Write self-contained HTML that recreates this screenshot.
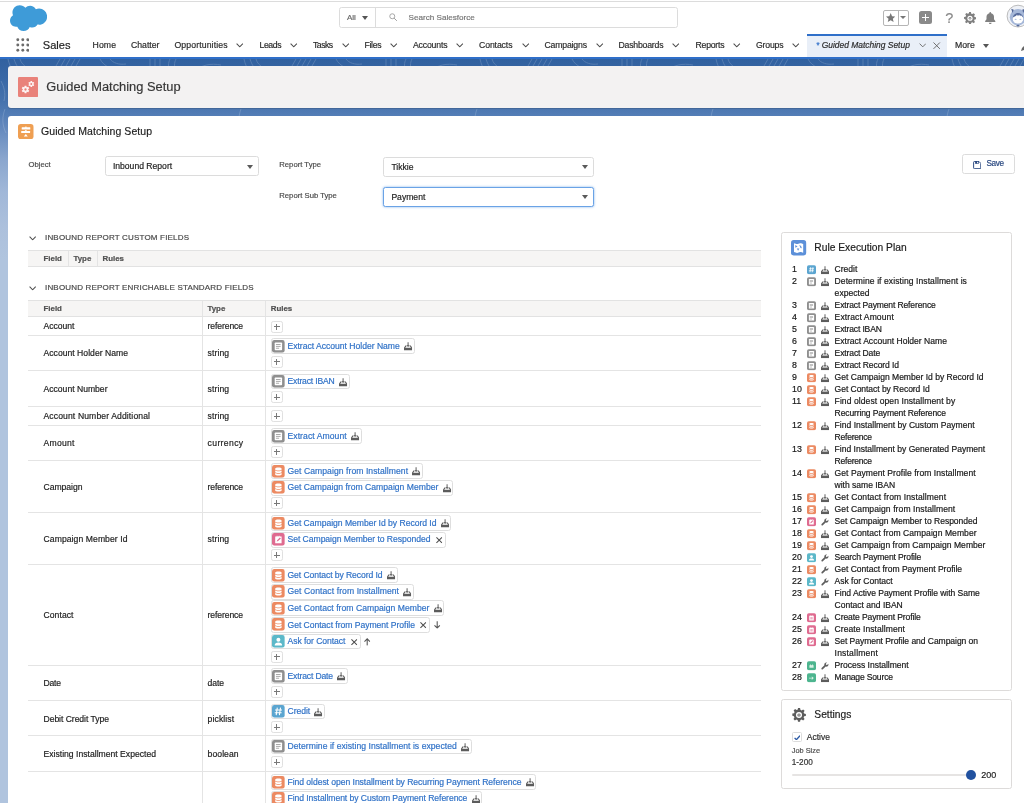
<!DOCTYPE html>
<html><head><meta charset="utf-8"><title>Guided Matching Setup | Salesforce</title>
<style>
*{box-sizing:border-box;margin:0;padding:0}
html,body{width:1024px;height:803px;overflow:hidden;background:#fff}
body{font-family:"Liberation Sans",sans-serif;font-size:8.600px;color:#1c1c1c;position:relative}
#root{position:absolute;left:0;top:0;width:1024px;height:803px;overflow:hidden;will-change:transform;-webkit-text-stroke:.18px}
.abs{position:absolute}
svg.ic{display:block;flex:none;overflow:visible}
#bg{position:absolute;left:0;top:59px;width:1024px;height:744px;background:linear-gradient(to bottom,#31619f 0px,#3867a5 18px,#4572ad 42px,#527cb5 55px,#6c8fc1 75px,#8aa6ce 100px,#a0b7d8 132px,#acc0dc 168px,#b0c4de 200px)}
#bline{position:absolute;left:0;top:56.500px;width:1024px;height:2.500px;background:#2f6fc9}
.nv{position:absolute;top:39.500px;font-size:8.700px;color:#2a2a2a;white-space:nowrap;line-height:11px}
#ph{position:absolute;left:8px;top:66px;width:1030px;height:42px;background:#f3f2f2;border-radius:3px;box-shadow:0 1px 1px rgba(0,0,0,.15)}
#card{position:absolute;left:8px;top:115.500px;width:1030px;height:700px;background:#fff;border-radius:3px}
.lbl{position:absolute;font-size:7.700px;color:#4a4a4a;white-space:nowrap;line-height:10px}
.sel{position:absolute;height:20px;border:1px solid #dcdcdc;border-radius:2.500px;background:#fff;font-size:8.600px;line-height:18px;padding-left:7.400px;color:#222}
.sel:after{content:"";position:absolute;right:5.200px;top:7.600px;border-left:3.600px solid transparent;border-right:3.600px solid transparent;border-top:4.200px solid #5a5a5a}
.sec{position:absolute;left:45px;font-size:8px;letter-spacing:.18px;color:#484848;white-space:nowrap;line-height:10px}
.th{position:absolute;left:28px;width:733px;height:17px;background:#f6f5f4;border-top:1px solid #e2e2e2;border-bottom:1px solid #e2e2e2}
.th span{position:absolute;top:3px;font-weight:bold;font-size:7.900px;color:#505050;line-height:10px}
#tb{position:absolute;left:28px;top:300.500px;width:733px;height:520px}
.tr{position:absolute;left:0;width:733px;border-bottom:1px solid #e4e4e4}
.tr>div{position:absolute;top:0;bottom:0}
.c1{left:0;width:174px;padding-left:15.500px;padding-top:1px;display:flex;align-items:center;white-space:nowrap}
.c2{left:174px;width:63px;padding-left:4.600px;padding-top:1px;display:flex;align-items:center;border-left:1px solid #e4e4e4}
.c3{left:237px;width:496px;padding-left:4.500px;padding-top:2.900px;border-left:1px solid #e4e4e4}
.pl{display:flex;align-items:flex-start;height:16.550px;}
.pill{display:inline-flex;align-items:center;height:15.600px;border:1px solid #dedede;border-radius:2.600px;padding-left:.3px;background:#fff}
.pt{color:#2f71c7;margin-left:2.900px;white-space:nowrap;line-height:13px;padding-top:.5px}
.plus{position:relative;width:12.300px;height:12px;border:1px solid #e0e0e0;border-radius:2.300px;margin-top:.7px}
.plus i{position:absolute;left:2.200px;top:4.500px;width:5.900px;height:1px;background:#787878}
.plus b{position:absolute;left:4.650px;top:2.050px;width:1px;height:5.900px;background:#787878}
.panel{position:absolute;left:781px;width:231px;border:1px solid #dddbda;border-radius:2.500px;background:#fff}
.ptitle{position:absolute;left:32.300px;font-size:10.250px;color:#1c1c1c;white-space:nowrap;line-height:13px}
.pr{position:absolute;left:10px;width:215px;line-height:12px;font-size:8.550px;color:#161616}
.pn{position:absolute;left:0;top:0;font-size:8.800px}
.ptx{position:absolute;left:42.600px;top:0;white-space:nowrap}
</style></head><body><div id="root">

<svg width="0" height="0" style="position:absolute">
<defs>
<symbol id="i-db" viewBox="0 0 26 26"><rect width="26" height="26" rx="5" fill="#ec8a62"/>
 <path d="M6.500 7.200c0-1.300 2.900-2.200 6.500-2.200s6.500.9 6.500 2.200v1.700c0 1.300-2.900 2.200-6.500 2.200s-6.500-.9-6.500-2.200z" fill="#fff"/>
 <path d="M6.500 11.300c1.400 1.100 3.800 1.500 6.500 1.500s5.100-.4 6.500-1.500v2.700c0 1.300-2.900 2.200-6.500 2.200s-6.500-.9-6.500-2.200z" fill="#fff"/>
 <path d="M6.500 16.400c1.400 1.100 3.800 1.500 6.500 1.500s5.100-.4 6.500-1.500v2.700c0 1.300-2.900 2.200-6.500 2.200s-6.500-.9-6.500-2.200z" fill="#fff"/>
</symbol>
<symbol id="i-doc" viewBox="0 0 26 26"><rect width="26" height="26" rx="5" fill="#8f8f8f"/>
 <rect x="5.500" y="5" width="15" height="16" rx="1.500" fill="#fff"/>
 <rect x="8" y="8.200" width="9.500" height="1.700" fill="#999"/><rect x="8" y="12" width="9.500" height="1.700" fill="#999"/><rect x="8" y="15.800" width="6.500" height="1.700" fill="#999"/>
</symbol>
<symbol id="i-upd" viewBox="0 0 26 26"><rect width="26" height="26" rx="5" fill="#df6b90"/>
 <path d="M6.500 7h3v-1.500h7v1.500h3v14h-13z" fill="#fff"/>
 <rect x="10.500" y="4.500" width="5" height="2.200" fill="#df6b90"/>
 <path d="M9.500 17.500l1-3 5.500-5.500 2 2-5.500 5.500z" fill="#df6b90"/>
</symbol>
<symbol id="i-crt" viewBox="0 0 26 26"><rect width="26" height="26" rx="5" fill="#df6b90"/>
 <path d="M6.500 7h3v-1.500h7v1.500h3v14h-13z" fill="#fff"/>
 <rect x="10.500" y="4.500" width="5" height="2.200" fill="#df6b90"/>
 <rect x="9.500" y="11" width="7" height="7" fill="#eeb0c4"/>
</symbol>
<symbol id="i-usr" viewBox="0 0 26 26"><rect width="26" height="26" rx="5" fill="#5cb8c9"/>
 <circle cx="13" cy="9.700" r="4" fill="#fff"/>
 <path d="M5.500 20.500c0-3.500 3-5.300 7.500-5.300s7.500 1.800 7.500 5.300v.8h-15z" fill="#fff"/>
</symbol>
<symbol id="i-hash" viewBox="0 0 26 26"><rect width="26" height="26" rx="5" fill="#5ba5d0"/>
 <path d="M10.800 5.500l-2.300 15M17.300 5.500l-2.300 15M6.300 10.200h14M5.500 15.800h14" stroke="#fff" stroke-width="2.200" fill="none"/>
</symbol>
<symbol id="i-grn1" viewBox="0 0 26 26"><rect width="26" height="26" rx="5" fill="#4db58f"/>
 <path d="M7 19v-7l3.500-3 2.500 3 2.500-3 3.500 3v7z" fill="#d9f0e3"/>
</symbol>
<symbol id="i-grn2" viewBox="0 0 26 26"><rect width="26" height="26" rx="5" fill="#4db58f"/>
 <path d="M6 13h9l-2.500-3h3l4 4-4 4h-3l2.500-3h-9z" fill="#d9f0e3"/>
</symbol>
<symbol id="i-dl" viewBox="0 0 16 16">
 <path d="M2.200 12l2.600-4.600h6.400l2.600 4.600z" fill="#dadada"/>
 <path d="M6.900 .2h2.200v5.400h2.200l-3.300 3.900-3.300-3.900h2.200z" fill="#6e6e6e"/>
 <path d="M0 16v-5.200l2.700-4.300h2.300l-2.500 4.700h11l-2.500-4.700h2.300l2.700 4.300v5.200z" fill="#5c5c5c"/>
</symbol>
<symbol id="i-x" viewBox="0 0 12 12"><path d="M.8 .8l10.400 10.400M11.200 .8l-10.400 10.400" stroke="#4d4d4d" stroke-width="1.900" fill="none"/></symbol>
<symbol id="i-dn" viewBox="0 0 12 14"><path d="M6 0.300v12.500M.9 7.700l5.100 5.100 5.100-5.100" stroke="#555" stroke-width="2" fill="none"/></symbol>
<symbol id="i-up" viewBox="0 0 12 14"><path d="M6 13.700v-12.500M.9 6.300l5.100-5.100 5.100 5.100" stroke="#555" stroke-width="2" fill="none"/></symbol>
<symbol id="i-wr" viewBox="0 0 16 16"><path d="M14.600 3.300l-2.500 2.500-2-.500-.5-2 2.500-2.500c-1.700-.600-3.600-.100-4.700 1.300-.9 1.200-1.100 2.700-.6 4l-5.600 5.700c-.7.700-.7 1.800 0 2.500s1.800.7 2.500 0l5.700-5.600c1.300.5 2.800.3 4-.6 1.400-1.100 1.900-3.100 1.200-4.800z" fill="#5f5f5f"/></symbol>
<symbol id="i-chev" viewBox="0 0 16 10"><path d="M1.300 1.300l6.700 6.900 6.700-6.900" stroke="#4f4f4f" stroke-width="2.300" fill="none"/></symbol>
</defs></svg>


<div class="abs" style="left:0;top:1px;width:1024px;height:1px;background:#dcdcdc"></div>
<!-- cloud logo -->
<svg class="abs" style="left:9.500px;top:4.500px" width="37" height="26" viewBox="0 0 74 52"><path fill="#3e9bd8" d="M30.800 5.700C33.200 3.200 36.500 1.600 40.200 1.600c4.900 0 9.200 2.700 11.500 6.800 2-.9 4.200-1.400 6.500-1.400 8.900 0 16 7.200 16 16.200s-7.200 16.200-16 16.200c-1.100 0-2.100-.1-3.200-.3-2 3.600-5.900 6-10.300 6-1.900 0-3.600-.4-5.200-1.200-2 4.800-6.800 8.100-12.300 8.100-5.800 0-10.700-3.600-12.600-8.700-.8.200-1.700.3-2.600.3C5.200 43.600 0 38 0 31.200c0-4.600 2.500-8.600 6.100-10.700-.8-1.700-1.200-3.600-1.200-5.700C4.900 6.800 11.400.4 19.400.4c4.700 0 8.800 2.100 11.400 5.300z"/></svg>
<!-- search -->
<div class="abs" style="left:339px;top:7px;width:338.500px;height:20.500px;border:1px solid #dcdcdc;border-radius:2.500px;background:#fff"></div>
<div class="abs" style="left:375px;top:8px;width:1px;height:19px;background:#dcdcdc"></div>
<div class="abs" style="left:347px;top:12px;font-size:8px;color:#666;line-height:11px">All</div>
<div class="abs" style="left:362.300px;top:15.800px;border-left:3.600px solid transparent;border-right:3.600px solid transparent;border-top:4.100px solid #555"></div>
<svg class="abs" style="left:388.800px;top:13.300px" width="8.500" height="8.500" viewBox="0 0 17 17"><circle cx="6.500" cy="6.500" r="5" stroke="#999" stroke-width="1.700" fill="none"/><path d="M10.200 10.200l5.500 5.500" stroke="#999" stroke-width="1.900"/></svg>
<div class="abs" style="left:408.600px;top:12px;font-size:8.100px;color:#757575;line-height:11px;white-space:nowrap">Search Salesforce</div>
<!-- right icons -->
<div class="abs" style="left:883px;top:10px;width:26px;height:15.500px;border:1px solid #b5b5b5;border-radius:2px;background:#fff"></div>
<div class="abs" style="left:897.500px;top:10px;width:1px;height:15.500px;background:#b5b5b5"></div>
<svg class="abs" style="left:886px;top:12.800px" width="9.400" height="9" viewBox="0 0 20 19"><path fill="#777" d="M10 0l2.900 6.600 7.100.7-5.400 4.700 1.600 7-6.200-3.700-6.200 3.700 1.600-7L0 7.300l7.100-.7z"/></svg>
<div class="abs" style="left:900.200px;top:16px;border-left:3.300px solid transparent;border-right:3.300px solid transparent;border-top:3.800px solid #777"></div>
<div class="abs" style="left:919px;top:11px;width:13.300px;height:13.300px;border-radius:2.500px;background:#8a8a8a"></div>
<div class="abs" style="left:922px;top:16.900px;width:7.300px;height:1.500px;background:#fff"></div>
<div class="abs" style="left:924.900px;top:14px;width:1.500px;height:7.300px;background:#fff"></div>
<div class="abs" style="left:945.200px;top:9px;font-size:14.500px;color:#8a8a8a;line-height:18px">?</div>
<svg class="abs" style="left:963.500px;top:11.500px" width="12" height="12.500" viewBox="0 0 24 25"><path fill="#808080" d="M10 0h4l.7 3.400 2.300 1 3-1.900 2.800 2.800-1.900 3 1 2.300 3.400.7v4l-3.400.7-1 2.300 1.900 3-2.800 2.800-3-1.900-2.300 1-.7 3.400h-4l-.7-3.400-2.300-1-3 1.900-2.800-2.800 1.900-3-1-2.300L-1 14.600v-4l3.400-.7 1-2.300-1.900-3 2.800-2.800 3 1.900 2.300-1z" transform="translate(1 .2) scale(.92)"/><circle cx="12" cy="12.500" r="5.200" fill="#fff"/><circle cx="12" cy="12.500" r="2.600" fill="#808080"/><circle cx="12" cy="12.500" r="1.100" fill="#fff"/></svg>
<svg class="abs" style="left:984px;top:11.500px" width="12.500" height="12.500" viewBox="0 0 25 25"><path fill="#808080" d="M12.500 0c1 0 1.800.8 1.800 1.800v.6c3.300.8 5.700 3.700 5.700 7.200v5l2.600 3.600c.5.800 0 1.800-1 1.800h-18.200c-1 0-1.500-1-1-1.800l2.600-3.600v-5c0-3.500 2.400-6.400 5.700-7.200v-.6c0-1 .8-1.800 1.800-1.800zM9.700 21.500h5.600c0 1.600-1.300 2.800-2.800 2.800s-2.800-1.200-2.800-2.800z"/></svg>
<!-- avatar -->
<svg class="abs" style="left:1006.200px;top:4.400px" width="24" height="24" viewBox="0 0 24 24">
 <circle cx="12" cy="12.100" r="10.900" fill="#eef1f7" stroke="#b4b4b4" stroke-width=".9"/>
 <circle cx="12" cy="13.300" r="8.200" fill="#a5b7d8"/>
 <path d="M5.200 4.800l2.600 1 -1.200 3.200zM18.800 4.800l-2.600 1 1.200 3.200z" fill="#4f6496"/>
 <ellipse cx="12" cy="15" rx="5.300" ry="4.500" fill="#fff"/>
 <path d="M6.800 13.500c.6-3 2.800-4.500 5.200-4.500s4.600 1.500 5.200 4.500c-1-.9-1.700-1.900-2.200-2.600l-.9 1.300-1-1.600-1.100 1.600-1-1.600-.8 1.200c-.8.400-1.900 1-3.400 1.700z" fill="#566b9c"/>
 <ellipse cx="9.600" cy="15.400" rx="1" ry=".7" fill="#b4c3e0"/><ellipse cx="14.400" cy="15.400" rx="1" ry=".7" fill="#b4c3e0"/>
 <ellipse cx="12" cy="21.600" rx="1.600" ry=".9" fill="#566b9c"/>
</svg>
<!-- nav row -->
<svg class="abs" style="left:15.800px;top:38px" width="13.600" height="14" viewBox="0 0 27 28"><g fill="#6b6b6b"><circle cx="3.500" cy="3.600" r="2.900"/><circle cx="13.500" cy="3.600" r="2.900"/><circle cx="23.500" cy="3.600" r="2.900"/><circle cx="3.500" cy="14" r="2.900"/><circle cx="13.500" cy="14" r="2.900"/><circle cx="23.500" cy="14" r="2.900"/><circle cx="3.500" cy="24.400" r="2.900"/><circle cx="13.500" cy="24.400" r="2.900"/><circle cx="23.500" cy="24.400" r="2.900"/></g></svg>
<div class="abs" style="left:42.800px;top:38px;font-size:11.100px;color:#1e1e1e;line-height:14px">Sales</div>
<span class="nv" style="left:92.5px;letter-spacing:0.104px;">Home</span>
<span class="nv" style="left:131px;letter-spacing:0.000px;">Chatter</span>
<span class="nv" style="left:174.5px;letter-spacing:0.111px;">Opportunities</span>
<svg class="ic" width="7.5" height="4.7" style="position:absolute;left:236px;top:43.400px"><use href="#i-chev"/></svg>
<span class="nv" style="left:259.5px;letter-spacing:-0.418px;">Leads</span>
<svg class="ic" width="7.5" height="4.7" style="position:absolute;left:290px;top:43.400px"><use href="#i-chev"/></svg>
<span class="nv" style="left:313px;letter-spacing:-0.500px;">Tasks</span>
<svg class="ic" width="7.5" height="4.7" style="position:absolute;left:341.5px;top:43.400px"><use href="#i-chev"/></svg>
<span class="nv" style="left:364.5px;letter-spacing:-0.336px;">Files</span>
<svg class="ic" width="7.5" height="4.7" style="position:absolute;left:389.5px;top:43.400px"><use href="#i-chev"/></svg>
<span class="nv" style="left:413px;letter-spacing:-0.176px;">Accounts</span>
<svg class="ic" width="7.5" height="4.7" style="position:absolute;left:456px;top:43.400px"><use href="#i-chev"/></svg>
<span class="nv" style="left:479px;letter-spacing:-0.114px;">Contacts</span>
<svg class="ic" width="7.5" height="4.7" style="position:absolute;left:521.5px;top:43.400px"><use href="#i-chev"/></svg>
<span class="nv" style="left:544.5px;letter-spacing:-0.182px;">Campaigns</span>
<svg class="ic" width="7.5" height="4.7" style="position:absolute;left:595.5px;top:43.400px"><use href="#i-chev"/></svg>
<span class="nv" style="left:618.5px;letter-spacing:-0.207px;">Dashboards</span>
<svg class="ic" width="7.5" height="4.7" style="position:absolute;left:672px;top:43.400px"><use href="#i-chev"/></svg>
<span class="nv" style="left:695.5px;letter-spacing:-0.237px;">Reports</span>
<svg class="ic" width="7.5" height="4.7" style="position:absolute;left:733px;top:43.400px"><use href="#i-chev"/></svg>
<span class="nv" style="left:756px;letter-spacing:-0.200px;">Groups</span>
<svg class="ic" width="7.5" height="4.7" style="position:absolute;left:792px;top:43.400px"><use href="#i-chev"/></svg>
<div class="abs" style="left:807px;top:33.500px;width:140px;height:23px;background:#e9eff8;border-top:2px solid #2f6fc9"></div>
<div class="abs" style="left:816px;top:39.500px;font-size:8.450px;font-style:italic;color:#2a2a2a;line-height:11px;white-space:nowrap"><span style="color:#2f6fc9">*</span> Guided Matching Setup</div>
<svg class="abs" style="left:918.500px;top:43.400px" width="7.500" height="4.700" viewBox="0 0 16 10"><path d="M1.300 1.300l6.700 6.900 6.700-6.900" stroke="#666" stroke-width="1.900" fill="none"/></svg>
<svg class="abs" style="left:933.400px;top:41.600px" width="7.400" height="7.400" viewBox="0 0 12 12"><path d="M.8 .8l10.400 10.400M11.200 .8l-10.400 10.400" stroke="#666" stroke-width="1.500" fill="none"/></svg>
<div class="abs nv" style="left:955px">More</div>
<div class="abs" style="left:983px;top:43.700px;border-left:3.400px solid transparent;border-right:3.400px solid transparent;border-top:4px solid #555"></div>
<svg class="abs" style="left:1020.500px;top:42.500px" width="8" height="8" viewBox="0 0 8 8"><path d="M0 8l1-3 5-5 2 2-5 5z" fill="#666"/></svg>

<div id="bg"></div>
<svg class="abs" style="left:0;top:59px;opacity:.16" width="1024" height="160" viewBox="0 0 1024 160"><defs><pattern id="wv" width="236" height="160" patternUnits="userSpaceOnUse"><g fill="none" stroke="#fff" stroke-width="1"><path d="M52 14l8-14M57 14l8-14M62 14l8-14M67 14l8-14M72 14l8-14"/><path d="M8 0c2 10 8 18 18 22M14 0c2 7 6 12 13 15M20 0c1 4 4 7 8 9"/><path d="M100 0c4 8 14 12 26 10M110 0c3 4 9 6 16 5"/><path d="M150 0v9M155 0v9M160 0v9M170 0c-2 4-2 8 0 12M176 0c-2 4-2 8 0 12"/><path d="M195 12c6-6 16-8 26-6M200 16c5-5 12-6 20-5"/><path d="M1 22c3 6 5 12 3 20M5 50c-3 8-3 16 1 24"/></g></pattern></defs><rect width="1024" height="160" fill="url(#wv)"/></svg>
<div id="bline"></div>
<!-- page header -->
<div id="ph">
 <svg class="abs" style="left:10.300px;top:11px" width="20.200" height="20" viewBox="0 0 20.200 20"><rect width="20.200" height="20" rx="1.300" fill="#e9827a"/><path d="M8.39 8.70L6.61 8.70L6.25 10.33L4.66 9.83L3.77 11.37L5.00 12.50L3.77 13.63L4.66 15.17L6.25 14.67L6.61 16.30L8.39 16.30L8.75 14.67L10.34 15.17L11.23 13.63L10.00 12.50L11.23 11.37L10.34 9.83L8.75 10.33z" fill="#fdf3f2"/><circle cx="7.500" cy="12.500" r="1.150" fill="#e9827a"/><path d="M14.01 3.98L12.59 3.98L12.30 5.27L11.04 4.88L10.33 6.10L11.30 7.00L10.33 7.90L11.04 9.12L12.30 8.73L12.59 10.02L14.01 10.02L14.30 8.73L15.56 9.12L16.27 7.90L15.30 7.00L16.27 6.10L15.56 4.88L14.30 5.27z" fill="#fdf3f2"/><circle cx="13.300" cy="7" r=".95" fill="#e9827a"/></svg>
 <div class="abs" style="left:38.300px;top:12.500px;font-size:12.850px;color:#363636;line-height:16px;white-space:nowrap">Guided Matching Setup</div>
</div>
<!-- main card -->
<div id="card"></div>
<svg class="abs" style="left:18.100px;top:123.600px" width="15.500" height="15.300" viewBox="0 0 15.500 15.300"><rect width="15.500" height="15.300" rx="2.800" fill="#ef9f52"/><g fill="#fff"><rect x="3.700" y="3.300" width="8.600" height="2.100" rx=".5"/><rect x="6.900" y="2.700" width="1.800" height="1" /><rect x="3.200" y="6.900" width="8.900" height="2.100" rx=".5"/><rect x="6.900" y="6.200" width="1.800" height="1"/><path d="M7.800 10l2 2.600h-4z"/></g></svg>
<div class="abs" style="left:41px;top:124.500px;font-size:10.500px;letter-spacing:.065px;color:#1f1f1f;line-height:13px;white-space:nowrap">Guided Matching Setup</div>

<div class="lbl" style="left:28.500px;top:159.500px">Object</div>
<div class="sel" style="left:104.500px;top:156.300px;width:154.500px">Inbound Report</div>
<div class="lbl" style="left:279.300px;top:160px">Report Type</div>
<div class="sel" style="left:383px;top:156.800px;width:211px">Tikkie</div>
<div class="lbl" style="left:279.300px;top:190.500px">Report Sub Type</div>
<div class="sel" style="left:383px;top:186.800px;width:211px;border-color:#6aa3e6;box-shadow:0 0 2.500px #7fb0ea">Payment</div>

<!-- save -->
<div class="abs" style="left:961.500px;top:154.300px;width:53px;height:19.500px;border:1px solid #dcdcdc;border-radius:2.500px;background:#fff"></div>
<svg class="abs" style="left:972.800px;top:160.600px" width="8.400" height="8.200" viewBox="0 0 16 16"><path fill="none" stroke="#27467f" stroke-width="1.900" d="M1 2.500a1.500 1.500 0 0 1 1.500-1.500h9l3.500 3.500v9a1.500 1.500 0 0 1-1.500 1.500h-11a1.500 1.500 0 0 1-1.500-1.500z"/><rect x="4" y="1" width="7" height="4.500" fill="#27467f"/><rect x="7.800" y="1.600" width="1.800" height="2.800" fill="#fff"/></svg>
<div class="abs" style="left:986.400px;top:159.400px;font-size:8.200px;letter-spacing:-.35px;color:#27467f;line-height:10px">Save</div>

<!-- section 1 -->
<svg class="ic abs" style="left:29.400px;top:235.700px" width="7.300" height="4.600"><use href="#i-chev"/></svg>
<div class="sec" style="top:232.600px">INBOUND REPORT CUSTOM FIELDS</div>
<div class="th" style="top:249.800px"><span style="left:15.500px">Field</span><span style="left:45.500px">Type</span><span style="left:74.500px">Rules</span></div>
<div class="abs" style="left:67.500px;top:251px;width:1px;height:15px;background:#e4e4e4"></div>
<div class="abs" style="left:96.500px;top:251px;width:1px;height:15px;background:#e4e4e4"></div>
<!-- section 2 -->
<svg class="ic abs" style="left:29.400px;top:285.700px" width="7.300" height="4.600"><use href="#i-chev"/></svg>
<div class="sec" style="top:282.600px">INBOUND REPORT ENRICHABLE STANDARD FIELDS</div>
<div class="th" style="top:299.800px"><span style="left:15.500px">Field</span><span style="left:179.500px">Type</span><span style="left:242.700px">Rules</span></div>
<div class="abs" style="left:202px;top:301px;width:1px;height:15px;background:#e4e4e4"></div>
<div class="abs" style="left:265px;top:301px;width:1px;height:15px;background:#e4e4e4"></div>
<div id="tb">
<div class="tr" style="top:16.5px;height:18.5px"><div class="c1"><span style="letter-spacing:-0.010px;">Account</span></div><div class="c2"><span style="letter-spacing:-0.102px;">reference</span></div><div class="c3"><div class="plus"><i></i><b></b></div></div></div>
<div class="tr" style="top:35.0px;height:35.5px"><div class="c1"><span style="letter-spacing:0.023px;">Account Holder Name</span></div><div class="c2"><span style="letter-spacing:0.097px;">string</span></div><div class="c3"><div class="pl"><span class="pill"><svg class="ic" width="12.8" height="12.8" style=""><use href="#i-doc"/></svg><span class="pt" style="letter-spacing:-0.017px;">Extract Account Holder Name</span><svg class="ic" width="8.2" height="8.6" style="margin-left:4.300px;margin-right:1.500px;margin-top:.6px"><use href="#i-dl"/></svg></span></div><div class="plus"><i></i><b></b></div></div></div>
<div class="tr" style="top:70.5px;height:35.5px"><div class="c1"><span style="letter-spacing:-0.001px;">Account Number</span></div><div class="c2"><span style="letter-spacing:0.097px;">string</span></div><div class="c3"><div class="pl"><span class="pill"><svg class="ic" width="12.8" height="12.8" style=""><use href="#i-doc"/></svg><span class="pt" style="letter-spacing:-0.172px;">Extract IBAN</span><svg class="ic" width="8.2" height="8.6" style="margin-left:4.300px;margin-right:1.500px;margin-top:.6px"><use href="#i-dl"/></svg></span></div><div class="plus"><i></i><b></b></div></div></div>
<div class="tr" style="top:106.0px;height:19.0px"><div class="c1"><span style="letter-spacing:0.118px;">Account Number Additional</span></div><div class="c2"><span style="letter-spacing:0.097px;">string</span></div><div class="c3"><div class="plus"><i></i><b></b></div></div></div>
<div class="tr" style="top:125.0px;height:35.0px"><div class="c1"><span style="letter-spacing:0.275px;">Amount</span></div><div class="c2"><span style="letter-spacing:0.364px;">currency</span></div><div class="c3"><div class="pl"><span class="pill"><svg class="ic" width="12.8" height="12.8" style=""><use href="#i-doc"/></svg><span class="pt" style="letter-spacing:0.071px;">Extract Amount</span><svg class="ic" width="8.2" height="8.6" style="margin-left:4.300px;margin-right:1.500px;margin-top:.6px"><use href="#i-dl"/></svg></span></div><div class="plus"><i></i><b></b></div></div></div>
<div class="tr" style="top:160.0px;height:52.0px"><div class="c1"><span style="letter-spacing:-0.025px;">Campaign</span></div><div class="c2"><span style="letter-spacing:-0.102px;">reference</span></div><div class="c3"><div class="pl"><span class="pill"><svg class="ic" width="12.8" height="12.8" style=""><use href="#i-db"/></svg><span class="pt" style="letter-spacing:0.059px;">Get Campaign from Installment</span><svg class="ic" width="8.2" height="8.6" style="margin-left:4.300px;margin-right:1.500px;margin-top:.6px"><use href="#i-dl"/></svg></span></div><div class="pl"><span class="pill"><svg class="ic" width="12.8" height="12.8" style=""><use href="#i-db"/></svg><span class="pt" style="letter-spacing:0.014px;">Get Campaign from Campaign Member</span><svg class="ic" width="8.2" height="8.6" style="margin-left:4.300px;margin-right:1.500px;margin-top:.6px"><use href="#i-dl"/></svg></span></div><div class="plus"><i></i><b></b></div></div></div>
<div class="tr" style="top:212.0px;height:52.0px"><div class="c1"><span style="letter-spacing:0.080px;">Campaign Member Id</span></div><div class="c2"><span style="letter-spacing:0.097px;">string</span></div><div class="c3"><div class="pl"><span class="pill"><svg class="ic" width="12.8" height="12.8" style=""><use href="#i-db"/></svg><span class="pt" style="letter-spacing:-0.029px;">Get Campaign Member Id by Record Id</span><svg class="ic" width="8.2" height="8.6" style="margin-left:4.300px;margin-right:1.500px;margin-top:.6px"><use href="#i-dl"/></svg></span></div><div class="pl"><span class="pill"><svg class="ic" width="12.8" height="12.8" style=""><use href="#i-upd"/></svg><span class="pt" style="letter-spacing:-0.041px;">Set Campaign Member to Responded</span><svg class="ic" width="6.4" height="6.4" style="margin-left:5.200px;margin-right:2.600px;margin-top:1.200px"><use href="#i-x"/></svg></span></div><div class="plus"><i></i><b></b></div></div></div>
<div class="tr" style="top:264.0px;height:101.0px"><div class="c1"><span style="letter-spacing:0.062px;">Contact</span></div><div class="c2"><span style="letter-spacing:-0.102px;">reference</span></div><div class="c3"><div class="pl"><span class="pill"><svg class="ic" width="12.8" height="12.8" style=""><use href="#i-db"/></svg><span class="pt" style="letter-spacing:-0.081px;">Get Contact by Record Id</span><svg class="ic" width="8.2" height="8.6" style="margin-left:4.300px;margin-right:1.500px;margin-top:.6px"><use href="#i-dl"/></svg></span></div><div class="pl"><span class="pill"><svg class="ic" width="12.8" height="12.8" style=""><use href="#i-db"/></svg><span class="pt" style="letter-spacing:0.079px;">Get Contact from Installment</span><svg class="ic" width="8.2" height="8.6" style="margin-left:4.300px;margin-right:1.500px;margin-top:.6px"><use href="#i-dl"/></svg></span></div><div class="pl"><span class="pill"><svg class="ic" width="12.8" height="12.8" style=""><use href="#i-db"/></svg><span class="pt" style="letter-spacing:0.035px;">Get Contact from Campaign Member</span><svg class="ic" width="8.2" height="8.6" style="margin-left:4.300px;margin-right:1.500px;margin-top:.6px"><use href="#i-dl"/></svg></span></div><div class="pl"><span class="pill"><svg class="ic" width="12.8" height="12.8" style=""><use href="#i-db"/></svg><span class="pt" style="letter-spacing:-0.032px;">Get Contact from Payment Profile</span><svg class="ic" width="6.4" height="6.4" style="margin-left:5.200px;margin-right:2.600px;margin-top:1.200px"><use href="#i-x"/></svg></span><svg class="ic" width="6.4" height="7.8" style="margin-left:3.600px;margin-top:4.300px"><use href="#i-dn"/></svg></div><div class="pl"><span class="pill"><svg class="ic" width="12.8" height="12.8" style=""><use href="#i-usr"/></svg><span class="pt" style="letter-spacing:-0.054px;">Ask for Contact</span><svg class="ic" width="6.4" height="6.4" style="margin-left:5.200px;margin-right:2.600px;margin-top:1.200px"><use href="#i-x"/></svg></span><svg class="ic" width="6.4" height="7.8" style="margin-left:3.600px;margin-top:4.300px"><use href="#i-up"/></svg></div><div class="plus"><i></i><b></b></div></div></div>
<div class="tr" style="top:365.0px;height:35.5px"><div class="c1"><span style="letter-spacing:-0.219px;">Date</span></div><div class="c2"><span style="letter-spacing:-0.078px;">date</span></div><div class="c3"><div class="pl"><span class="pill"><svg class="ic" width="12.8" height="12.8" style=""><use href="#i-doc"/></svg><span class="pt" style="letter-spacing:-0.154px;">Extract Date</span><svg class="ic" width="8.2" height="8.6" style="margin-left:4.300px;margin-right:1.500px;margin-top:.6px"><use href="#i-dl"/></svg></span></div><div class="plus"><i></i><b></b></div></div></div>
<div class="tr" style="top:400.5px;height:35.0px"><div class="c1"><span style="letter-spacing:-0.047px;">Debit Credit Type</span></div><div class="c2"><span style="letter-spacing:0.100px;">picklist</span></div><div class="c3"><div class="pl"><span class="pill"><svg class="ic" width="12.8" height="12.8" style=""><use href="#i-hash"/></svg><span class="pt" style="letter-spacing:-0.048px;">Credit</span><svg class="ic" width="8.2" height="8.6" style="margin-left:4.300px;margin-right:1.500px;margin-top:.6px"><use href="#i-dl"/></svg></span></div><div class="plus"><i></i><b></b></div></div></div>
<div class="tr" style="top:435.5px;height:35.5px"><div class="c1"><span style="letter-spacing:0.008px;">Existing Installment Expected</span></div><div class="c2"><span style="letter-spacing:0.068px;">boolean</span></div><div class="c3"><div class="pl"><span class="pill"><svg class="ic" width="12.8" height="12.8" style=""><use href="#i-doc"/></svg><span class="pt" style="letter-spacing:0.037px;">Determine if existing Installment is expected</span><svg class="ic" width="8.2" height="8.6" style="margin-left:4.300px;margin-right:1.500px;margin-top:.6px"><use href="#i-dl"/></svg></span></div><div class="plus"><i></i><b></b></div></div></div>
<div class="tr" style="top:471.0px;height:59.0px"><div class="c1"></div><div class="c2"></div><div class="c3"><div class="pl"><span class="pill"><svg class="ic" width="12.8" height="12.8" style=""><use href="#i-db"/></svg><span class="pt" style="letter-spacing:-0.051px;">Find oldest open Installment by Recurring Payment Reference</span><svg class="ic" width="8.2" height="8.6" style="margin-left:4.300px;margin-right:1.500px;margin-top:.6px"><use href="#i-dl"/></svg></span></div><div class="pl"><span class="pill"><svg class="ic" width="12.8" height="12.8" style=""><use href="#i-db"/></svg><span class="pt" style="letter-spacing:-0.060px;">Find Installment by Custom Payment Reference</span><svg class="ic" width="8.2" height="8.6" style="margin-left:4.300px;margin-right:1.500px;margin-top:.6px"><use href="#i-dl"/></svg></span></div><div class="pl"><span class="pill"><svg class="ic" width="12.8" height="12.8" style=""><use href="#i-db"/></svg><span class="pt" style="letter-spacing:-0.065px;">Find Installment by Generated Payment Reference</span><svg class="ic" width="8.2" height="8.6" style="margin-left:4.300px;margin-right:1.500px;margin-top:.6px"><use href="#i-dl"/></svg></span></div><div class="plus"><i></i><b></b></div></div></div>
</div>

<!-- rule execution plan -->
<div class="panel" style="top:232.400px;height:458.800px">
 <svg class="abs" style="left:9.400px;top:7.100px" width="15.200" height="15.400" viewBox="0 0 15.200 15.400"><rect width="15.200" height="15.400" rx="2.700" fill="#5c90d9"/><path d="M3 3.200c1.500 0 2 .9 3.100.9s1.600-.9 3.100-.9 1.800.6 3 .7v8.800c-1.200-.1-1.600-.7-3-.7s-2 .9-3.100.9-1.600-.9-3.100-.9z" fill="#fff"/><path d="M4.300 5l2.300 1.400-2.300 1.400zM8.400 5.200c1.600.2 2.300 1.300 2.300 3l-1.300-.2c0-1-.3-1.600-1-1.900zM5.800 8.400h2.600l-1.300 2.300z" fill="#5c90d9"/></svg>
 <div class="ptitle" style="top:8px">Rule Execution Plan</div>
<div class="pr" style="top:30.1px"><span class="pn">1</span><svg class="ic" width="9" height="9.5" style="position:absolute;left:14.600px;top:1.600px"><use href="#i-hash"/></svg><svg class="ic" width="8" height="8.3" style="position:absolute;left:28.800px;top:2.600px"><use href="#i-dl"/></svg><span class="ptx"><span style="letter-spacing:-0.023px;">Credit</span></span></div>
<div class="pr" style="top:42.1px"><span class="pn">2</span><svg class="ic" width="9" height="9.5" style="position:absolute;left:14.600px;top:1.600px"><use href="#i-doc"/></svg><svg class="ic" width="8" height="8.3" style="position:absolute;left:28.800px;top:2.600px"><use href="#i-dl"/></svg><span class="ptx"><span style="letter-spacing:0.075px;">Determine if existing Installment is</span><br><span style="letter-spacing:0.042px;">expected</span></span></div>
<div class="pr" style="top:66.1px"><span class="pn">3</span><svg class="ic" width="9" height="9.5" style="position:absolute;left:14.600px;top:1.600px"><use href="#i-doc"/></svg><svg class="ic" width="8" height="8.3" style="position:absolute;left:28.800px;top:2.600px"><use href="#i-dl"/></svg><span class="ptx"><span style="letter-spacing:-0.138px;">Extract Payment Reference</span></span></div>
<div class="pr" style="top:78.1px"><span class="pn">4</span><svg class="ic" width="9" height="9.5" style="position:absolute;left:14.600px;top:1.600px"><use href="#i-doc"/></svg><svg class="ic" width="8" height="8.3" style="position:absolute;left:28.800px;top:2.600px"><use href="#i-dl"/></svg><span class="ptx"><span style="letter-spacing:0.095px;">Extract Amount</span></span></div>
<div class="pr" style="top:90.1px"><span class="pn">5</span><svg class="ic" width="9" height="9.5" style="position:absolute;left:14.600px;top:1.600px"><use href="#i-doc"/></svg><svg class="ic" width="8" height="8.3" style="position:absolute;left:28.800px;top:2.600px"><use href="#i-dl"/></svg><span class="ptx"><span style="letter-spacing:-0.147px;">Extract IBAN</span></span></div>
<div class="pr" style="top:102.1px"><span class="pn">6</span><svg class="ic" width="9" height="9.5" style="position:absolute;left:14.600px;top:1.600px"><use href="#i-doc"/></svg><svg class="ic" width="8" height="8.3" style="position:absolute;left:28.800px;top:2.600px"><use href="#i-dl"/></svg><span class="ptx"><span style="letter-spacing:0.007px;">Extract Account Holder Name</span></span></div>
<div class="pr" style="top:114.1px"><span class="pn">7</span><svg class="ic" width="9" height="9.5" style="position:absolute;left:14.600px;top:1.600px"><use href="#i-doc"/></svg><svg class="ic" width="8" height="8.3" style="position:absolute;left:28.800px;top:2.600px"><use href="#i-dl"/></svg><span class="ptx"><span style="letter-spacing:-0.130px;">Extract Date</span></span></div>
<div class="pr" style="top:126.1px"><span class="pn">8</span><svg class="ic" width="9" height="9.5" style="position:absolute;left:14.600px;top:1.600px"><use href="#i-doc"/></svg><svg class="ic" width="8" height="8.3" style="position:absolute;left:28.800px;top:2.600px"><use href="#i-dl"/></svg><span class="ptx"><span style="letter-spacing:-0.096px;">Extract Record Id</span></span></div>
<div class="pr" style="top:138.1px"><span class="pn">9</span><svg class="ic" width="9" height="9.5" style="position:absolute;left:14.600px;top:1.600px"><use href="#i-db"/></svg><svg class="ic" width="8" height="8.3" style="position:absolute;left:28.800px;top:2.600px"><use href="#i-dl"/></svg><span class="ptx"><span style="letter-spacing:-0.005px;">Get Campaign Member Id by Record Id</span></span></div>
<div class="pr" style="top:150.1px"><span class="pn">10</span><svg class="ic" width="9" height="9.5" style="position:absolute;left:14.600px;top:1.600px"><use href="#i-db"/></svg><svg class="ic" width="8" height="8.3" style="position:absolute;left:28.800px;top:2.600px"><use href="#i-dl"/></svg><span class="ptx"><span style="letter-spacing:-0.058px;">Get Contact by Record Id</span></span></div>
<div class="pr" style="top:162.1px"><span class="pn">11</span><svg class="ic" width="9" height="9.5" style="position:absolute;left:14.600px;top:1.600px"><use href="#i-db"/></svg><svg class="ic" width="8" height="8.3" style="position:absolute;left:28.800px;top:2.600px"><use href="#i-dl"/></svg><span class="ptx"><span style="letter-spacing:0.076px;">Find oldest open Installment by</span><br><span style="letter-spacing:-0.137px;">Recurring Payment Reference</span></span></div>
<div class="pr" style="top:186.1px"><span class="pn">12</span><svg class="ic" width="9" height="9.5" style="position:absolute;left:14.600px;top:1.600px"><use href="#i-db"/></svg><svg class="ic" width="8" height="8.3" style="position:absolute;left:28.800px;top:2.600px"><use href="#i-dl"/></svg><span class="ptx"><span style="letter-spacing:0.010px;">Find Installment by Custom Payment</span><br><span style="letter-spacing:-0.242px;">Reference</span></span></div>
<div class="pr" style="top:210.1px"><span class="pn">13</span><svg class="ic" width="9" height="9.5" style="position:absolute;left:14.600px;top:1.600px"><use href="#i-db"/></svg><svg class="ic" width="8" height="8.3" style="position:absolute;left:28.800px;top:2.600px"><use href="#i-dl"/></svg><span class="ptx"><span style="letter-spacing:-0.000px;">Find Installment by Generated Payment</span><br><span style="letter-spacing:-0.242px;">Reference</span></span></div>
<div class="pr" style="top:234.1px"><span class="pn">14</span><svg class="ic" width="9" height="9.5" style="position:absolute;left:14.600px;top:1.600px"><use href="#i-db"/></svg><svg class="ic" width="8" height="8.3" style="position:absolute;left:28.800px;top:2.600px"><use href="#i-dl"/></svg><span class="ptx"><span style="letter-spacing:0.038px;">Get Payment Profile from Installment</span><br><span style="letter-spacing:-0.023px;">with same IBAN</span></span></div>
<div class="pr" style="top:258.1px"><span class="pn">15</span><svg class="ic" width="9" height="9.5" style="position:absolute;left:14.600px;top:1.600px"><use href="#i-db"/></svg><svg class="ic" width="8" height="8.3" style="position:absolute;left:28.800px;top:2.600px"><use href="#i-dl"/></svg><span class="ptx"><span style="letter-spacing:0.101px;">Get Contact from Installment</span></span></div>
<div class="pr" style="top:270.1px"><span class="pn">16</span><svg class="ic" width="9" height="9.5" style="position:absolute;left:14.600px;top:1.600px"><use href="#i-db"/></svg><svg class="ic" width="8" height="8.3" style="position:absolute;left:28.800px;top:2.600px"><use href="#i-dl"/></svg><span class="ptx"><span style="letter-spacing:0.083px;">Get Campaign from Installment</span></span></div>
<div class="pr" style="top:282.1px"><span class="pn">17</span><svg class="ic" width="9" height="9.5" style="position:absolute;left:14.600px;top:1.600px"><use href="#i-upd"/></svg><svg class="ic" width="8" height="8.3" style="position:absolute;left:28.800px;top:2.600px"><use href="#i-wr"/></svg><span class="ptx"><span style="letter-spacing:-0.016px;">Set Campaign Member to Responded</span></span></div>
<div class="pr" style="top:294.1px"><span class="pn">18</span><svg class="ic" width="9" height="9.5" style="position:absolute;left:14.600px;top:1.600px"><use href="#i-db"/></svg><svg class="ic" width="8" height="8.3" style="position:absolute;left:28.800px;top:2.600px"><use href="#i-dl"/></svg><span class="ptx"><span style="letter-spacing:0.060px;">Get Contact from Campaign Member</span></span></div>
<div class="pr" style="top:306.1px"><span class="pn">19</span><svg class="ic" width="9" height="9.5" style="position:absolute;left:14.600px;top:1.600px"><use href="#i-db"/></svg><svg class="ic" width="8" height="8.3" style="position:absolute;left:28.800px;top:2.600px"><use href="#i-dl"/></svg><span class="ptx"><span style="letter-spacing:0.039px;">Get Campaign from Campaign Member</span></span></div>
<div class="pr" style="top:318.1px"><span class="pn">20</span><svg class="ic" width="9" height="9.5" style="position:absolute;left:14.600px;top:1.600px"><use href="#i-usr"/></svg><svg class="ic" width="8" height="8.3" style="position:absolute;left:28.800px;top:2.600px"><use href="#i-wr"/></svg><span class="ptx"><span style="letter-spacing:-0.143px;">Search Payment Profile</span></span></div>
<div class="pr" style="top:330.1px"><span class="pn">21</span><svg class="ic" width="9" height="9.5" style="position:absolute;left:14.600px;top:1.600px"><use href="#i-db"/></svg><svg class="ic" width="8" height="8.3" style="position:absolute;left:28.800px;top:2.600px"><use href="#i-wr"/></svg><span class="ptx"><span style="letter-spacing:-0.009px;">Get Contact from Payment Profile</span></span></div>
<div class="pr" style="top:342.1px"><span class="pn">22</span><svg class="ic" width="9" height="9.5" style="position:absolute;left:14.600px;top:1.600px"><use href="#i-usr"/></svg><svg class="ic" width="8" height="8.3" style="position:absolute;left:28.800px;top:2.600px"><use href="#i-wr"/></svg><span class="ptx"><span style="letter-spacing:-0.031px;">Ask for Contact</span></span></div>
<div class="pr" style="top:354.1px"><span class="pn">23</span><svg class="ic" width="9" height="9.5" style="position:absolute;left:14.600px;top:1.600px"><use href="#i-db"/></svg><svg class="ic" width="8" height="8.3" style="position:absolute;left:28.800px;top:2.600px"><use href="#i-dl"/></svg><span class="ptx"><span style="letter-spacing:-0.044px;">Find Active Payment Profile with Same</span><br><span style="letter-spacing:-0.015px;">Contact and IBAN</span></span></div>
<div class="pr" style="top:378.1px"><span class="pn">24</span><svg class="ic" width="9" height="9.5" style="position:absolute;left:14.600px;top:1.600px"><use href="#i-crt"/></svg><svg class="ic" width="8" height="8.3" style="position:absolute;left:28.800px;top:2.600px"><use href="#i-dl"/></svg><span class="ptx"><span style="letter-spacing:-0.103px;">Create Payment Profile</span></span></div>
<div class="pr" style="top:390.1px"><span class="pn">25</span><svg class="ic" width="9" height="9.5" style="position:absolute;left:14.600px;top:1.600px"><use href="#i-crt"/></svg><svg class="ic" width="8" height="8.3" style="position:absolute;left:28.800px;top:2.600px"><use href="#i-dl"/></svg><span class="ptx"><span style="letter-spacing:0.055px;">Create Installment</span></span></div>
<div class="pr" style="top:402.1px"><span class="pn">26</span><svg class="ic" width="9" height="9.5" style="position:absolute;left:14.600px;top:1.600px"><use href="#i-upd"/></svg><svg class="ic" width="8" height="8.3" style="position:absolute;left:28.800px;top:2.600px"><use href="#i-dl"/></svg><span class="ptx"><span style="letter-spacing:-0.056px;">Set Payment Profile and Campaign on</span><br><span style="letter-spacing:0.187px;">Installment</span></span></div>
<div class="pr" style="top:426.1px"><span class="pn">27</span><svg class="ic" width="9" height="9.5" style="position:absolute;left:14.600px;top:1.600px"><use href="#i-grn1"/></svg><svg class="ic" width="8" height="8.3" style="position:absolute;left:28.800px;top:2.600px"><use href="#i-wr"/></svg><span class="ptx"><span style="letter-spacing:-0.032px;">Process Installment</span></span></div>
<div class="pr" style="top:438.1px"><span class="pn">28</span><svg class="ic" width="9" height="9.5" style="position:absolute;left:14.600px;top:1.600px"><use href="#i-grn2"/></svg><svg class="ic" width="8" height="8.3" style="position:absolute;left:28.800px;top:2.600px"><use href="#i-dl"/></svg><span class="ptx"><span style="letter-spacing:-0.162px;">Manage Source</span></span></div>
</div>
<!-- settings -->
<div class="panel" style="top:699px;height:89.500px">
 <svg class="abs" style="left:9.700px;top:8.200px" width="14" height="14" viewBox="0 0 24 25"><path fill="#5c5c5c" d="M10 0h4l.7 3.400 2.300 1 3-1.900 2.800 2.800-1.900 3 1 2.300 3.400.7v4l-3.400.7-1 2.300 1.900 3-2.800 2.800-3-1.900-2.300 1-.7 3.400h-4l-.7-3.400-2.300-1-3 1.900-2.800-2.800 1.900-3-1-2.300L-1 14.600v-4l3.400-.7 1-2.300-1.900-3 2.800-2.800 3 1.900 2.300-1z" transform="translate(1 .2) scale(.92)"/><circle cx="12" cy="12.500" r="5.400" fill="#fff"/><circle cx="12" cy="12.500" r="2.900" fill="#5c5c5c"/><circle cx="12" cy="12.500" r="1.200" fill="#fff"/></svg>
 <div class="ptitle" style="top:8.300px;left:32.300px">Settings</div>
 <div class="abs" style="left:9.800px;top:32.300px;width:10px;height:10px;border:1px solid #dcdcdc;border-radius:1.500px;background:#fff"></div>
 <svg class="abs" style="left:11.700px;top:34.600px" width="6.600" height="5.400" viewBox="0 0 11 9"><path d="M1 4.800l3 3 6-6.800" stroke="#2b5aa6" stroke-width="2.300" fill="none"/></svg>
 <div class="abs" style="left:24.800px;top:30.800px;font-size:8.500px;color:#2d2d2d;line-height:12px">Active</div>
 <div class="abs" style="left:9.800px;top:46.400px;font-size:7.350px;color:#4d4d4d;line-height:10px">Job Size</div>
 <div class="abs" style="left:9.800px;top:57.800px;font-size:8.200px;color:#333;line-height:10px">1-200</div>
 <div class="abs" style="left:9.800px;top:74.400px;width:178px;height:1.800px;border-radius:1px;background:#e6e4e3"></div>
 <div class="abs" style="left:184.400px;top:70.400px;width:9.800px;height:9.800px;border-radius:50%;background:#21519f"></div>
 <div class="abs" style="left:199.200px;top:68.700px;font-size:9px;color:#1e1e1e;line-height:12px">200</div>
</div>

</div></body></html>
